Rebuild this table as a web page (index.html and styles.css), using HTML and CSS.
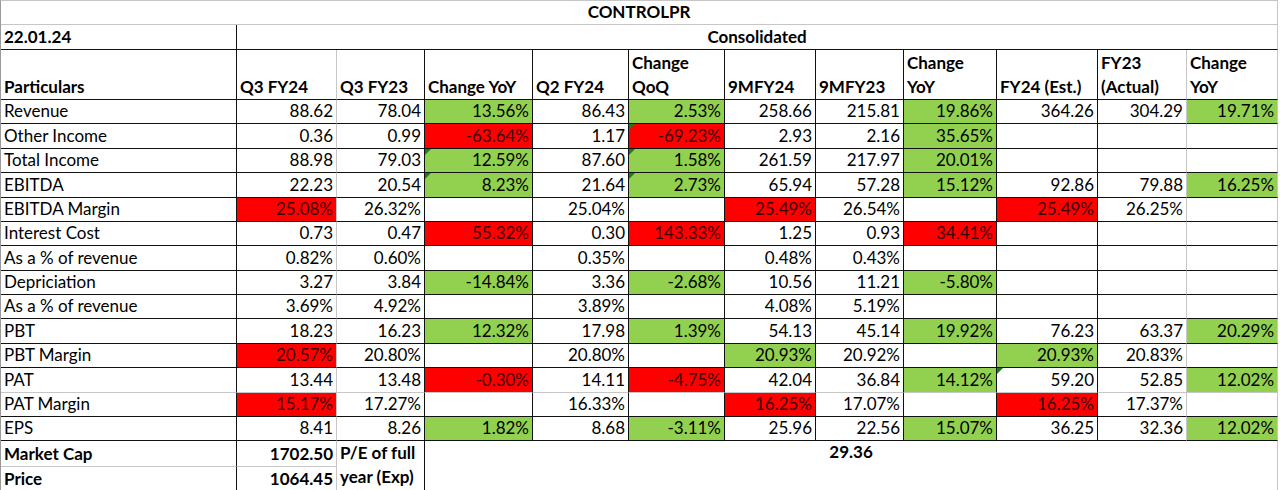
FILE: index.html
```html
<!DOCTYPE html>
<html>
<head>
<meta charset="utf-8">
<link rel="stylesheet" href="styles.css">
</head>
<body>
<table class="sheet">
  <colgroup>
    <col class="c1"><col class="c2"><col class="c3"><col class="c4"><col class="c5"><col class="c6">
    <col class="c7"><col class="c8"><col class="c9"><col class="c10"><col class="c11"><col class="c12">
  </colgroup>
  <tr class="title"><td colspan="12">CONTROLPR</td></tr>
  <tr class="date"><td class="lbl">22.01.24</td><td colspan="11" class="cons">Consolidated</td></tr>
  <tr class="head">
    <td>Particulars</td><td>Q3 FY24</td><td>Q3 FY23</td><td>Change YoY</td><td>Q2 FY24</td><td>Change<br>QoQ</td>
    <td>9MFY24</td><td>9MFY23</td><td>Change<br>YoY</td><td>FY24 (Est.)</td><td>FY23<br>(Actual)</td><td>Change<br>YoY</td>
  </tr>
  <tr class="row"><td>Revenue</td><td>88.62</td><td>78.04</td><td class="g">13.56%</td><td>86.43</td><td class="g">2.53%</td><td>258.66</td><td>215.81</td><td class="g">19.86%</td><td>364.26</td><td>304.29</td><td class="g">19.71%</td></tr>
  <tr class="row"><td>Other Income</td><td>0.36</td><td>0.99</td><td class="r">-63.64%</td><td>1.17</td><td class="r t">-69.23%</td><td>2.93</td><td>2.16</td><td class="g">35.65%</td><td></td><td></td><td></td></tr>
  <tr class="row"><td>Total Income</td><td>88.98</td><td>79.03</td><td class="g t">12.59%</td><td>87.60</td><td class="g t">1.58%</td><td>261.59</td><td>217.97</td><td class="g">20.01%</td><td></td><td></td><td></td></tr>
  <tr class="row"><td>EBITDA</td><td>22.23</td><td>20.54</td><td class="g t">8.23%</td><td>21.64</td><td class="g t">2.73%</td><td>65.94</td><td>57.28</td><td class="g">15.12%</td><td>92.86</td><td>79.88</td><td class="g">16.25%</td></tr>
  <tr class="row"><td>EBITDA Margin</td><td class="r">25.08%</td><td>26.32%</td><td></td><td>25.04%</td><td></td><td class="r">25.49%</td><td>26.54%</td><td></td><td class="r">25.49%</td><td>26.25%</td><td></td></tr>
  <tr class="row"><td>Interest Cost</td><td>0.73</td><td>0.47</td><td class="r">55.32%</td><td>0.30</td><td class="r">143.33%</td><td>1.25</td><td>0.93</td><td class="r">34.41%</td><td></td><td></td><td></td></tr>
  <tr class="row"><td>As a % of revenue</td><td>0.82%</td><td>0.60%</td><td></td><td>0.35%</td><td></td><td>0.48%</td><td>0.43%</td><td></td><td></td><td></td><td></td></tr>
  <tr class="row"><td>Depriciation</td><td>3.27</td><td>3.84</td><td class="g">-14.84%</td><td>3.36</td><td class="g">-2.68%</td><td>10.56</td><td>11.21</td><td class="g">-5.80%</td><td></td><td></td><td></td></tr>
  <tr class="row"><td>As a % of revenue</td><td>3.69%</td><td>4.92%</td><td></td><td>3.89%</td><td></td><td>4.08%</td><td>5.19%</td><td></td><td></td><td></td><td></td></tr>
  <tr class="row"><td>PBT</td><td>18.23</td><td>16.23</td><td class="g">12.32%</td><td>17.98</td><td class="g">1.39%</td><td>54.13</td><td>45.14</td><td class="g">19.92%</td><td>76.23</td><td>63.37</td><td class="g">20.29%</td></tr>
  <tr class="row"><td>PBT Margin</td><td class="r">20.57%</td><td>20.80%</td><td></td><td>20.80%</td><td></td><td class="g">20.93%</td><td>20.92%</td><td></td><td class="g">20.93%</td><td>20.83%</td><td></td></tr>
  <tr class="row soft"><td>PAT</td><td>13.44</td><td>13.48</td><td class="r">-0.30%</td><td>14.11</td><td class="r">-4.75%</td><td>42.04</td><td>36.84</td><td class="g">14.12%</td><td class="t">59.20</td><td>52.85</td><td class="g">12.02%</td></tr>
  <tr class="row"><td>PAT Margin</td><td class="r">15.17%</td><td>17.27%</td><td></td><td>16.33%</td><td></td><td class="r">16.25%</td><td>17.07%</td><td></td><td class="r">16.25%</td><td>17.37%</td><td></td></tr>
  <tr class="row"><td>EPS</td><td>8.41</td><td>8.26</td><td class="g">1.82%</td><td>8.68</td><td class="g">-3.11%</td><td>25.96</td><td>22.56</td><td class="g">15.07%</td><td>36.25</td><td>32.36</td><td class="g">12.02%</td></tr>
  <tr class="row foot soft"><td>Market Cap</td><td>1702.50</td><td rowspan="2" class="pe">P/E of full<br>year (Exp)</td><td colspan="9" rowspan="2" class="pev">29.36</td></tr>
  <tr class="row foot last"><td>Price</td><td>1064.45</td></tr>
</table>
</body>
</html>
```

FILE: styles.css
```css
html, body {
  margin: 0;
  padding: 0;
  background: #ffffff;
}

.sheet {
  border-collapse: separate;
  border-spacing: 0;
  table-layout: fixed;
  width: 1278px;
  border-left: 1px solid #9a9a9a;
  border-top: 1px solid #c6c6c6;
  font-family: "Lato", "Open Sans", sans-serif;
  font-size: 17px;
  color: #000;
}

.c1 { width: 236px; }
.c2 { width: 100px; }
.c3 { width: 88px; }
.c4 { width: 108px; }
.c5 { width: 96px; }
.c6 { width: 96px; }
.c7 { width: 91px; }
.c8 { width: 88px; }
.c9 { width: 93px; }
.c10 { width: 101px; }
.c11 { width: 89px; }
.c12 { width: 91px; }

.sheet td {
  box-sizing: border-box;
  border-right: 1px solid #111;
  border-bottom: 1px solid #111;
  padding: 0 3px 2px 3px;
  line-height: 20px;
  vertical-align: bottom;
  white-space: nowrap;
  overflow: hidden;
  text-align: right;
  position: relative;
}

.sheet td:first-child {
  text-align: left;
}

/* title row */
.title td {
  height: 24px;
  text-align: center !important;
  font-weight: 700;
  border-right-color: #c6c6c6;
  border-bottom-color: #c6c6c6;
}

/* date row */
.date td {
  height: 25px;
  font-weight: 700;
}
.date .cons {
  text-align: center;
  border-right-color: #c6c6c6;
}

/* header row */
.head td {
  height: 50px;
  font-weight: 700;
  text-align: left;
  line-height: 24px;
  padding-bottom: 0;
}

/* data rows */
.row td {
  height: 24.375px;
}

.sheet .row td:nth-child(2),
.sheet .head td:nth-child(2) {
  border-right-color: #c6c6c6;
}
.sheet .row td:nth-child(11),
.sheet .row td:nth-child(12),
.sheet .head td:nth-child(11),
.sheet .head td:nth-child(12) {
  border-right-color: #c6c6c6;
}

.row.soft td {
  border-bottom-color: #c6c6c6;
}

/* footer rows */
.foot td {
  font-weight: 700;
}
.sheet .foot td.pe {
  text-align: left;
  vertical-align: top;
  line-height: 24px;
  padding-top: 0;
  border-right-color: #111;
  border-bottom-color: #c6c6c6;
}
.sheet .foot td.pev {
  text-align: center;
  vertical-align: top;
  line-height: 20px;
  padding-top: 1px;
  border-right-color: #c6c6c6;
  border-bottom-color: #c6c6c6;
}
.last td {
  border-bottom-color: #c6c6c6;
}

/* fills */
.g {
  background: #92d050;
}
.r {
  background: #ff0000;
  color: #3a0000;
}

/* excel error indicator */
.t::before {
  content: "";
  position: absolute;
  left: 0;
  top: 0;
  width: 0;
  height: 0;
  border-top: 6px solid #1f7a1f;
  border-right: 6px solid transparent;
}
```
